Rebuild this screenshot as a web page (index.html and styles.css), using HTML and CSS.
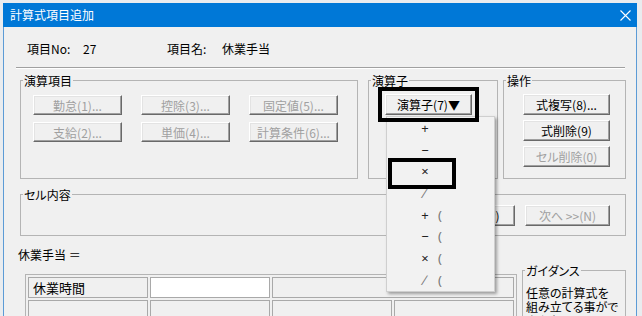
FILE: index.html
```html
<!DOCTYPE html>
<html lang="ja">
<head>
<meta charset="utf-8">
<title>計算式項目追加</title>
<link rel="stylesheet" href="styles.css">
</head>
<body>
<div class="window">
  <div class="titlebar">
    <span class="title">計算式項目追加</span>
    <svg class="close" width="11" height="11" viewBox="0 0 11 11"><path d="M0.5 0.5 L10.5 10.5 M10.5 0.5 L0.5 10.5" stroke="#fff" stroke-width="1.1" fill="none"/></svg>
  </div>
  <div class="client">
    <div class="header">
      <span class="lbl1">項目No:</span><span class="val1">27</span><span class="lbl2">項目名:</span><span>休業手当</span>
    </div>
    <div class="sep"></div>
    <div class="groups">
      <fieldset class="grp g-items">
        <legend>演算項目</legend>
        <div class="items-grid">
          <button class="btn" disabled>勤怠(1)...</button>
          <button class="btn" disabled>控除(3)...</button>
          <button class="btn" disabled>固定値(5)...</button>
          <button class="btn" disabled>支給(2)...</button>
          <button class="btn" disabled>単価(4)...</button>
          <button class="btn" disabled>計算条件(6)...</button>
        </div>
      </fieldset>
      <fieldset class="grp g-op">
        <legend>演算子</legend>
        <div class="op-inner">
          <div class="op-wrap">
            <button class="btn op-btn">演算子(7)▼</button>
            <div class="menu">
              <div class="mi"><span class="sym">+</span></div>
              <div class="mi"><span class="sym">−</span></div>
              <div class="mi"><span class="sym">×</span></div>
              <div class="mi"><span class="sym thin">∕</span></div>
              <div class="mi"><span class="sym">+</span><span class="par">(</span></div>
              <div class="mi"><span class="sym">−</span><span class="par">(</span></div>
              <div class="mi"><span class="sym">×</span><span class="par">(</span></div>
              <div class="mi"><span class="sym thin">∕</span><span class="par">(</span></div>
              <div class="mark"></div>
            </div>
          </div>
        </div>
      </fieldset>
      <fieldset class="grp g-act">
        <legend>操作</legend>
        <div class="act-col">
          <button class="btn">式複写(8)...</button>
          <button class="btn">式削除(9)</button>
          <button class="btn" disabled>セル削除(0)</button>
        </div>
      </fieldset>
    </div>
    <fieldset class="grp g-cell">
      <legend>セル内容</legend>
      <div class="nav">
        <button class="btn">&lt;&lt; 前へ(P)</button>
        <button class="btn nav-next" disabled>次へ &gt;&gt;(N)</button>
      </div>
    </fieldset>
    <div class="formula">休業手当 ＝</div>
    <div class="lower">
      <div class="grid">
        <div class="cell">休業時間</div>
        <div class="cell white"></div>
        <div class="cell span2"></div>
        <div class="cell"></div>
        <div class="cell"></div>
        <div class="cell"></div>
        <div class="cell"></div>
      </div>
      <fieldset class="grp g-guide">
        <legend>ガイダンス</legend>
        <p class="guide">任意の計算式を<br>組み立てる事がで<br>きます。</p>
      </fieldset>
    </div>
  </div>
</div>
</body>
</html>
```

FILE: styles.css
```css
* { box-sizing: border-box; }
html, body { margin: 0; height: 100%; }
body {
  background: #e9ecef;
  overflow: hidden;
  font: 12px/14px "Noto Sans CJK JP", "Noto Sans", sans-serif;
  font-feature-settings: "palt";
  color: #000;
}
.window {
  margin: 3px 0 0 3px;
  width: 634px;
  height: 313px;
  display: flex;
  flex-direction: column;
}
.titlebar {
  height: 24px;
  flex: none;
  background: #0078d7;
  color: #fff;
  display: flex;
  align-items: center;
  justify-content: space-between;
  padding: 0 6px 0 7px;
}
.close { display: block; }
.client {
  flex: 1;
  background: #f0f0f0;
  border-left: 1px solid #5c9bd6;
  border-right: 1px solid #5c9bd6;
  padding: 15px 10px 0 16px;
  overflow: hidden;
}
.header { display: flex; height: 14px; padding-left: 7px; }
.lbl1 { width: 56px; }
.val1 { width: 84px; }
.lbl2 { width: 55px; }
.sep {
  margin: 11px 1px 0 -4px;
  height: 2px;
  border-top: 1px solid #a0a0a0;
  border-bottom: 1px solid #fff;
}
.groups { display: flex; margin-top: 4px; height: 106px; gap: 10px; }
fieldset.grp {
  margin: 0;
  padding: 0;
  min-width: 0;
  border: 1px solid #b4b4b4;
}
fieldset.grp legend {
  padding: 0 1px;
  margin-left: 2px;
  line-height: 15px;
  height: 15px;
}
.g-items { width: 338px; flex: none; }
.g-op { width: 130px; flex: none; margin-right: -5px !important; }
.g-act { flex: 1; }
.btn {
  font: inherit;
  font-feature-settings: "palt";
  margin: 0;
  padding: 0;
  height: 20px;
  line-height: 17px;
  color: #000;
  background: #f0f0f0;
  border: 1px solid;
  border-color: #fff #696969 #696969 #fff;
  box-shadow: inset -1px -1px #a0a0a0, inset 1px 1px #e3e3e3;
  text-align: center;
  white-space: nowrap;
}
.btn:disabled { color: #a0a0a0; }
.items-grid {
  display: grid;
  grid-template-columns: repeat(3, 89px);
  grid-auto-rows: 20px;
  column-gap: 19px;
  row-gap: 7px;
  padding: 7px 0 0 12px;
}
.op-inner { padding: 6px 0 0 16px; }
.op-wrap { position: relative; width: 87px; }
.op-btn {
  position: relative;
  z-index: 2;
  width: 87px;
  height: 21px;
  outline: 4px solid #000;
  outline-offset: 3px;
}
.menu {
  position: absolute;
  z-index: 1;
  left: 1px;
  top: 22px;
  width: 109px;
  height: 176px;
  background: #f2f2f2;
  border: 1px solid #cfcfcf;
  box-shadow: 2px 2px 3px rgba(0, 0, 0, 0.35);
}
.mi {
  height: 21.7px;
  display: flex;
  align-items: center;
  padding-left: 32px;
  color: #222;
  font-family: "Noto Sans", sans-serif;
  font-size: 13px;
}
.sym { width: 12px; text-align: center; }
.sym.thin { color: #777; font-size: 14px; }
.par { margin-left: 7px; color: #777; }
.mark {
  position: absolute;
  left: 1px;
  top: 41px;
  width: 68px;
  height: 31px;
  border: 4px solid #000;
}
.act-col {
  display: flex;
  flex-direction: column;
  gap: 5px;
  padding: 6px 0 0 19px;
}
.act-col .btn { width: 87px; height: 21px; }
.g-cell { margin-top: 8px !important; height: 49px; }
.nav {
  display: flex;
  justify-content: flex-end;
  gap: 10px;
  padding: 3px 15px 0 0;
}
.nav .btn { width: 87px; height: 21px; }
.nav .nav-next { width: 85px; }
.formula { margin: 12px 0 0 -2px; line-height: 14px; }
.lower { display: flex; align-items: flex-start; gap: 5px; margin-top: 1px; }
.grid {
  margin: 11px 0 0 5px;
  border: 1px solid #b4b4b4;
  padding: 2px;
  display: grid;
  grid-template-columns: repeat(4, 120px);
  grid-auto-rows: 21px;
  gap: 2px;
}
.cell {
  border: 1px solid #a9a9a9;
  padding: 2px 0 0 4px;
  line-height: 15px;
  font-size: 13px;
}
.cell.white { background: #fff; }
.cell.span2 { grid-column: span 2; }
.g-guide { flex: 1; height: 80px; }
.guide {
  margin: 0;
  padding: 8px 2px 0 3px;
  line-height: 14px;
  font-size: 12px;
}
```
